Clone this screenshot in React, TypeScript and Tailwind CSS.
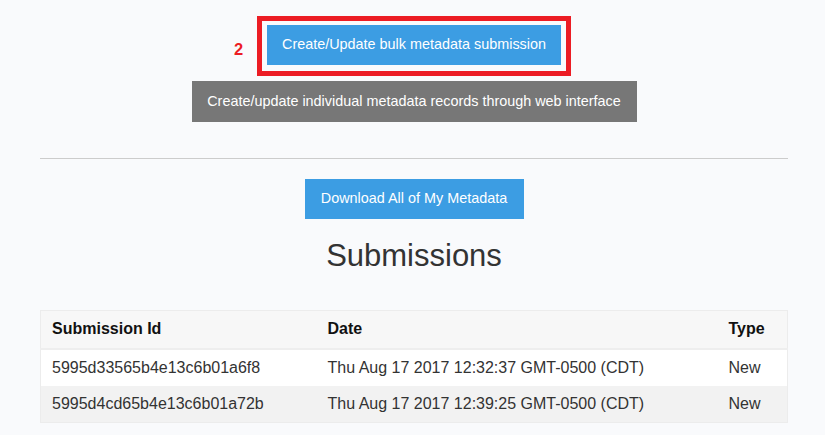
const rows = [
  { id: '5995d33565b4e13c6b01a6f8', date: 'Thu Aug 17 2017 12:32:37 GMT-0500 (CDT)', type: 'New' },
  { id: '5995d4cd65b4e13c6b01a72b', date: 'Thu Aug 17 2017 12:39:25 GMT-0500 (CDT)', type: 'New' },
];

const App = () => {
  return (
    <div className="min-h-[435px] bg-[#f9fafc] font-['Liberation_Sans',Arial,sans-serif] text-[#333]">
      <div className="ml-[40px] w-[748px] pt-[16px] flex flex-col items-center">
        <div className="relative border-[5px] border-[#ec1c24] pt-[4px] pb-[6px] px-[5px]">
          <span className="absolute left-[-28px] top-[20px] text-[16.5px] font-bold leading-none text-[#ec1c24]">2</span>
          <button className="h-[40px] w-[294px] bg-[#3c9de3] text-[14.4px] text-white">
            Create/Update bulk metadata submission
          </button>
        </div>
        <button className="mt-[5px] h-[41px] w-[445px] bg-[#777777] text-[14.4px] text-white">
          Create/update individual metadata records through web interface
        </button>
        <hr className="mt-[36px] w-full border-t border-[#cccccc]" />
        <button className="mt-[20px] h-[40px] w-[219px] bg-[#3c9de3] text-[14.4px] text-white">
          Download All of My Metadata
        </button>
        <h2 className="mt-[19px] text-[31px] leading-[36px] text-[#333]">Submissions</h2>
        <table className="mt-[36px] w-full border-collapse border border-[#ececec] text-[16px] text-left">
          <thead>
            <tr className="h-[38px] bg-[#f7f7f7] border-b-2 border-[#eeeeee]">
              <th className="w-[276px] pl-[11px] font-bold text-[#111]">Submission Id</th>
              <th className="w-[401px] pl-[11px] font-bold text-[#111]">Date</th>
              <th className="pl-[11px] font-bold text-[#111]">Type</th>
            </tr>
          </thead>
          <tbody>
            {rows.map((row, i) => (
              <tr key={row.id} className={i % 2 === 0 ? 'h-[37px] bg-white' : 'h-[37px] bg-[#f2f2f2]'}>
                <td className="pl-[11px]">{row.id}</td>
                <td className="pl-[11px]">{row.date}</td>
                <td className="pl-[11px]">{row.type}</td>
              </tr>
            ))}
          </tbody>
        </table>
      </div>
    </div>
  );
};

export default App;
